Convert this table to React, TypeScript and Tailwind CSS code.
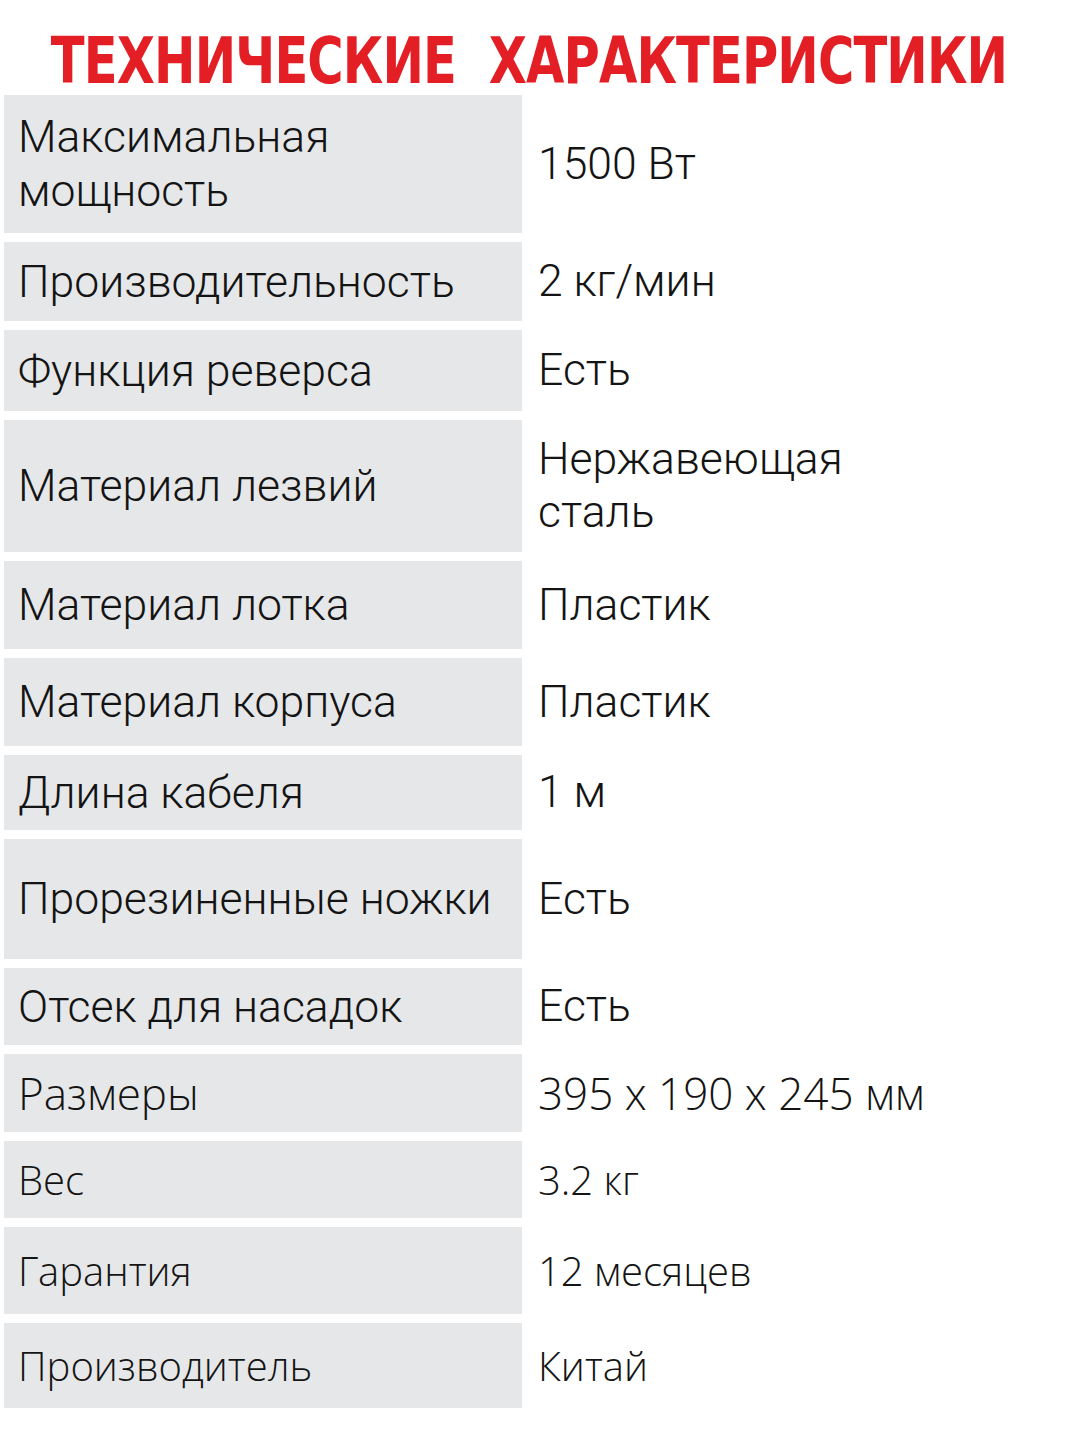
import React from "react";

type Spec = {
  label: string[];
  value: string[];
  h: string;
  alt?: boolean;
  small?: boolean;
};

const specs: Spec[] = [
  { label: ["Максимальная", "мощность"], value: ["1500 Вт"], h: "h-[138px]" },
  { label: ["Производительность"], value: ["2 кг/мин"], h: "h-[79px]" },
  { label: ["Функция реверса"], value: ["Есть"], h: "h-[81px]" },
  { label: ["Материал лезвий"], value: ["Нержавеющая", "сталь"], h: "h-[132px]" },
  { label: ["Материал лотка"], value: ["Пластик"], h: "h-[88px]" },
  { label: ["Материал корпуса"], value: ["Пластик"], h: "h-[88px]" },
  { label: ["Длина кабеля"], value: ["1 м"], h: "h-[75px]" },
  { label: ["Прорезиненные ножки"], value: ["Есть"], h: "h-[120px]" },
  { label: ["Отсек для насадок"], value: ["Есть"], h: "h-[77px]" },
  { label: ["Размеры"], value: ["395 x 190 x 245 мм"], h: "h-[78px]", alt: true },
  { label: ["Вес"], value: ["3.2 кг"], h: "h-[77px]", alt: true, small: true },
  { label: ["Гарантия"], value: ["12 месяцев"], h: "h-[87px]", alt: true, small: true },
  { label: ["Производитель"], value: ["Китай"], h: "h-[85px]", alt: true, small: true },
];

const SpecRow: React.FC<{ spec: Spec }> = ({ spec }) => {
  const font = spec.alt
    ? "font-['Open_Sans','Lato',sans-serif] font-light"
    : "font-['Roboto',sans-serif] font-light";
  const size = spec.alt
    ? spec.small
      ? "text-[40px]"
      : "text-[44px]"
    : "text-[44.5px]";
  return (
    <div className={`flex ${spec.h}`}>
      <div
        className={`w-[518px] shrink-0 bg-[#e6e7e8] flex flex-col justify-center pl-[14px] ${font} ${size} leading-[54px] text-[#141414]`}
      >
        {spec.label.map((l) => (
          <span key={l}>{l}</span>
        ))}
      </div>
      <div
        className={`flex flex-col justify-center pl-[16px] ${font} ${size} leading-[53px] text-[#141414]`}
      >
        {spec.value.map((v) => (
          <span key={v}>{v}</span>
        ))}
      </div>
    </div>
  );
};

export default function App() {
  return (
    <div className="w-[1080px] h-[1440px] bg-white overflow-hidden">
      <div className="h-[95px] pt-[26px] pr-[22px] flex justify-center">
        <h1 className="w-max shrink-0 font-['DejaVu_Sans_Condensed',sans-serif] font-bold text-[64px] leading-[70px] text-[#e31e24] tracking-[-1px] scale-x-[0.86] whitespace-pre">
          {"ТЕХНИЧЕСКИЕ  ХАРАКТЕРИСТИКИ"}
        </h1>
      </div>
      <div className="flex flex-col gap-[9px] pl-[4px]">
        {specs.map((s) => (
          <SpecRow key={s.label.join(" ")} spec={s} />
        ))}
      </div>
    </div>
  );
}
